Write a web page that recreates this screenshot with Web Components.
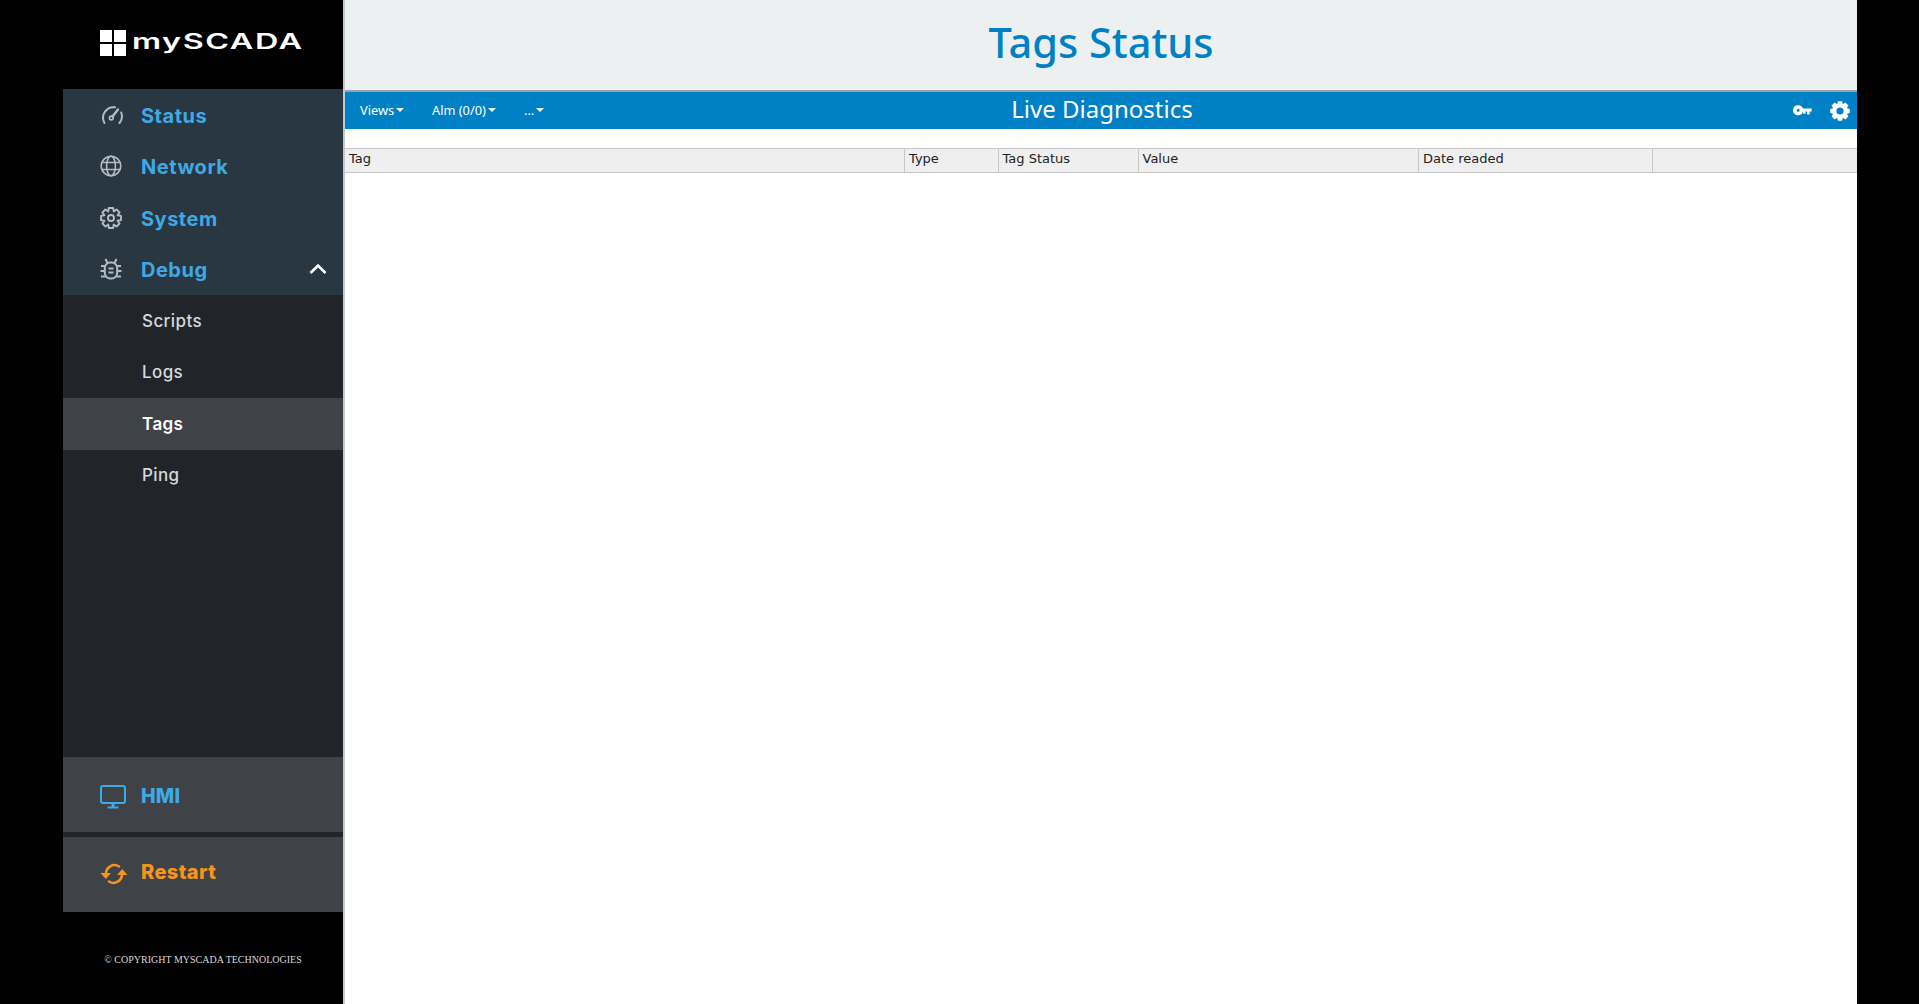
<!DOCTYPE html>
<html lang="en">
<head>
<meta charset="utf-8">
<title>Tags Status</title>
<style>
  html, body { margin: 0; height: 100%; background: #000; overflow: hidden; }
  body { display: flex; padding-left: 63px; width: 1794px; height: 1004px; }
</style>
</head>
<body>
<scada-sidebar>
  <nav-item label="Status" icon="gauge"></nav-item>
  <nav-item label="Network" icon="globe"></nav-item>
  <nav-item label="System" icon="gear"></nav-item>
  <nav-item label="Debug" icon="bug" open></nav-item>
  <sub-item slot="sub">Scripts</sub-item>
  <sub-item slot="sub">Logs</sub-item>
  <sub-item slot="sub" active>Tags</sub-item>
  <sub-item slot="sub">Ping</sub-item>
  <big-item slot="bottom" label="HMI" icon="monitor"></big-item>
  <big-item slot="bottom" label="Restart" icon="sync" accent="#f7941d"></big-item>
</scada-sidebar>
<scada-main>
  <diag-toolbar></diag-toolbar>
  <tag-table></tag-table>
</scada-main>

<script>
// outline of a cog, used by the sidebar gear and the toolbar gear
function gearPath(c, outer, inner, teeth) {
  const pts = [];
  const step = Math.PI * 2 / teeth;
  for (let i = 0; i < teeth; i++) {
    const a = i * step - Math.PI / 2;
    [[inner, -0.5], [outer, -0.27], [outer, 0.27], [inner, 0.5]].forEach(([r, k]) => {
      const t = a + k * step;
      pts.push((c + r * Math.cos(t)).toFixed(2) + ' ' + (c + r * Math.sin(t)).toFixed(2));
    });
  }
  return 'M' + pts.join('L') + 'Z';
}

const ICONS = {
  gauge: `<svg width="24" height="20" viewBox="0 0 24 20" fill="none" stroke="#b4bcc2" stroke-width="2" stroke-linecap="round">
    <path d="M4.500 18A10.500 10.500 0 0 1 15 2.300"/>
    <path d="M21.200 7.500A10.500 10.500 0 0 1 19.500 18"/>
    <path d="M18 4.500 12.500 11.500" stroke-width="2.400"/>
    <circle cx="11.300" cy="13" r="1.900" stroke-width="1.600"/></svg>`,
  globe: `<svg width="22" height="22" viewBox="0 0 22 22" fill="none" stroke="#b4bcc2" stroke-width="1.600">
    <circle cx="11" cy="11" r="9.800"/><ellipse cx="11" cy="11" rx="4.400" ry="9.800"/>
    <path d="M2 7.500h18M2 14.500h18"/></svg>`,
  gear: `<svg width="22" height="22" viewBox="0 0 22 22" fill="none" stroke="#b4bcc2" stroke-width="1.900" stroke-linejoin="round">
    <path d="${gearPath(11, 10.200, 7.100, 8)}"/><circle cx="11" cy="11" r="3"/></svg>`,
  bug: `<svg width="22" height="22" viewBox="0 0 22 22" fill="none" stroke="#b4bcc2" stroke-width="2" stroke-linecap="butt">
    <rect x="4.800" y="4.500" width="12.400" height="16" rx="5.500"/>
    <path d="M7.500 5 5.500 1M14.500 5l2-4M1 8h4M17 8h4M0.500 13h4M17.500 13h4M1 18.500h4.500M16.500 18.500h4.500M8.500 10.500h5M8.500 14.500h5"/></svg>`,
  monitor: `<svg width="26" height="24" viewBox="0 0 26 24" fill="none" stroke="#3fa9e6" stroke-width="2">
    <rect x="1" y="1" width="24" height="17" rx="2"/><path d="M13 18v4" stroke-width="3"/><path d="M7.500 22.500h11"/></svg>`,
  sync: `<svg width="28" height="22" viewBox="0 0 28 22" fill="none" stroke="#f7941d" stroke-width="2.500" stroke-linecap="round">
    <path d="M6 11A8.500 8.500 0 0 1 19 3.500"/><path d="M22 11A8.500 8.500 0 0 1 9 18.500"/>
    <path d="M0.500 10h10.500L5.800 16z" fill="#f7941d" stroke="none"/><path d="M17 12h10.500L22.200 6z" fill="#f7941d" stroke="none"/></svg>`
};

class ScadaSidebar extends HTMLElement {
  constructor() {
    super();
    this.attachShadow({ mode: 'open' }).innerHTML = `
      <style>
        :host { display: flex; flex-direction: column; width: 280px; flex: none; height: 1004px; background: #000; }
        .logo { height: 89px; display: flex; align-items: flex-start; gap: 6px; padding: 30px 0 0 37px; box-sizing: border-box; color: #fff; }
        .mark { display: grid; grid-template-columns: 12px 12px; grid-auto-rows: 12px; gap: 2px; }
        .mark i { background: #fff; }
        .word { font: 600 21px/24px Inter, sans-serif; letter-spacing: 1px; transform-origin: left top; transform: scaleX(1.54); }
        .main { background: #293742; height: 206px; }
        .sub { background: #212529; height: 462px; }
        .bottom { display: flex; flex-direction: column; gap: 5px; background: #212529; }
        .copy { flex: 1; display: flex; align-items: center; justify-content: center; color: #d8d8d8;
                font: 10px "Liberation Serif", serif; padding-top: 3px; }
      </style>
      <div class="logo">
        <div class="mark"><i></i><i></i><i></i><i></i></div>
        <div class="word">mySCADA</div>
      </div>
      <div class="main"><slot></slot></div>
      <div class="sub"><slot name="sub"></slot></div>
      <div class="bottom"><slot name="bottom"></slot></div>
      <div class="copy">© COPYRIGHT MYSCADA TECHNOLOGIES</div>`;
  }
}

class NavItem extends HTMLElement {
  constructor() {
    super();
    const open = this.hasAttribute('open');
    this.attachShadow({ mode: 'open' }).innerHTML = `
      <style>
        :host { display: flex; align-items: center; height: 51.500px; padding: 0 16px 0 37px; }
        .ic { width: 41px; flex: none; display: flex; align-items: center; }
        .label { flex: 1; color: #3fa9e6; font: 700 20px Inter, sans-serif; letter-spacing: .5px; padding-top: 2px; }
        svg.chev { display: block; }
      </style>
      <span class="ic">${ICONS[this.getAttribute('icon')]}</span>
      <span class="label">${this.getAttribute('label')}</span>
      ${open ? `<svg class="chev" width="18" height="12" viewBox="0 0 18 12" fill="none" stroke="#fff" stroke-width="2.600"><path d="M1.500 10 9 2.500l7.500 7.500"/></svg>` : ''}`;
  }
}

class SubItem extends HTMLElement {
  constructor() {
    super();
    const active = this.hasAttribute('active');
    this.attachShadow({ mode: 'open' }).innerHTML = `
      <style>
        :host { display: flex; align-items: center; height: 51.500px; padding-left: 79px;
                background: ${active ? '#3f4347' : 'transparent'}; color: ${active ? '#fff' : '#d6d8da'};
                font: ${active ? 600 : 500} 17px Inter, sans-serif; letter-spacing: .4px; }
      </style>
      <slot></slot>`;
  }
}

class BigItem extends HTMLElement {
  constructor() {
    super();
    const color = this.getAttribute('accent') || '#3fa9e6';
    this.attachShadow({ mode: 'open' }).innerHTML = `
      <style>
        :host { display: flex; align-items: center; height: 75px; padding-left: 37px; background: #3f4347; }
        .ic { width: 41px; flex: none; display: flex; align-items: center; margin-top: 5px; }
        .label { color: ${color}; font: 800 19.500px Inter, sans-serif; letter-spacing: .2px; margin-top: 2px; }
        :host([accent]) .ic { margin-top: 0; margin-bottom: 2px; }
        :host([accent]) .label { margin-top: 0; margin-bottom: 5px; font-size: 20px; letter-spacing: .4px; }
      </style>
      <span class="ic">${ICONS[this.getAttribute('icon')]}</span>
      <span class="label">${this.getAttribute('label')}</span>`;
  }
}

class ScadaMain extends HTMLElement {
  constructor() {
    super();
    this.attachShadow({ mode: 'open' }).innerHTML = `
      <style>
        :host { display: flex; flex-direction: column; flex: 1; min-width: 0; height: 1004px; background: #fff; border-left: 2px solid #c4c8ca; box-sizing: border-box; }
        header { height: 90px; background: #ecf0f1; border-bottom: 2px solid #9ea3a5;
                 display: flex; align-items: center; justify-content: center; color: #0081c6;
                 font: 500 41.500px "Noto Sans", sans-serif; }
        h1 { margin: 0 0 6px 0; font: inherit; }
      </style>
      <header><h1>Tags Status</h1></header>
      <slot></slot>`;
  }
}

class DiagToolbar extends HTMLElement {
  constructor() {
    super();
    const caret = `<i class="caret"></i>`;
    this.attachShadow({ mode: 'open' }).innerHTML = `
      <style>
        :host { display: grid; grid-template-columns: 1fr auto 1fr; align-items: center; height: 37px; background: #0081c6; color: #fff; }
        .menus { display: flex; padding: 0 0 2px 15px; font: 12.800px "Noto Sans", sans-serif; }
        .menus span { display: flex; align-items: center; gap: 2px; }
        .menus span:nth-child(1) { width: 72px; }
        .menus span:nth-child(2) { width: 92px; }
        .caret { width: 0; height: 0; border: 4px solid transparent; border-top-color: #fff; border-bottom: 0; }
        h2 { margin: 0 0 3px 2px; font: 400 24px/32px "Noto Sans", sans-serif; }
        .tools { display: flex; justify-content: flex-end; align-items: center; gap: 18px; padding-right: 7px; }
        svg { display: block; }
      </style>
      <div class="menus">
        <span>Views${caret}</span><span>Alm (0/0)${caret}</span><span>...${caret}</span>
      </div>
      <h2>Live Diagnostics</h2>
      <div class="tools">
        <svg width="19" height="11" viewBox="0 0 19 11" fill="#fff"><path fill-rule="evenodd" d="M5.200.300a5 5 0 0 1 4.700 3.300h8.800v3h-2v3h-2.600v-3h-1.500v2.200h-2.400V6.600h-.3A5 5 0 1 1 5.200.300zm0 3.500a1.500 1.500 0 1 0 0 3 1.500 1.500 0 0 0 0-3z"/></svg>
        <svg width="20" height="20" viewBox="0 0 20 20" fill="#fff"><path fill-rule="evenodd" d="${gearPath(10, 10, 7.400, 8)}M10 6.400a3.600 3.600 0 1 0 0 7.200 3.600 3.600 0 0 0 0-7.200z"/></svg>
      </div>`;
  }
}

class TagTable extends HTMLElement {
  constructor() {
    super();
    const cols = ['Tag', 'Type', 'Tag Status', 'Value', 'Date readed', ''];
    this.attachShadow({ mode: 'open' }).innerHTML = `
      <style>
        :host { display: grid; grid-template-columns: 560px 93.500px 140px 280.500px 234px 1fr; margin-top: 19px; height: 23px;
                background: #efefef; border-top: 1px solid #c8c8c8; border-bottom: 1px solid #c8c8c8;
                color: #222; font: 13px/20px "DejaVu Sans", sans-serif; }
        div { padding: 0 4px; box-sizing: border-box; border-right: 1px solid #c8c8c8; }
        div:last-child { border-right: 0; }
      </style>
      ${cols.map(c => `<div>${c}</div>`).join('')}`;
  }
}

customElements.define('scada-sidebar', ScadaSidebar);
customElements.define('nav-item', NavItem);
customElements.define('sub-item', SubItem);
customElements.define('big-item', BigItem);
customElements.define('scada-main', ScadaMain);
customElements.define('diag-toolbar', DiagToolbar);
customElements.define('tag-table', TagTable);
</script>
</body>
</html>
